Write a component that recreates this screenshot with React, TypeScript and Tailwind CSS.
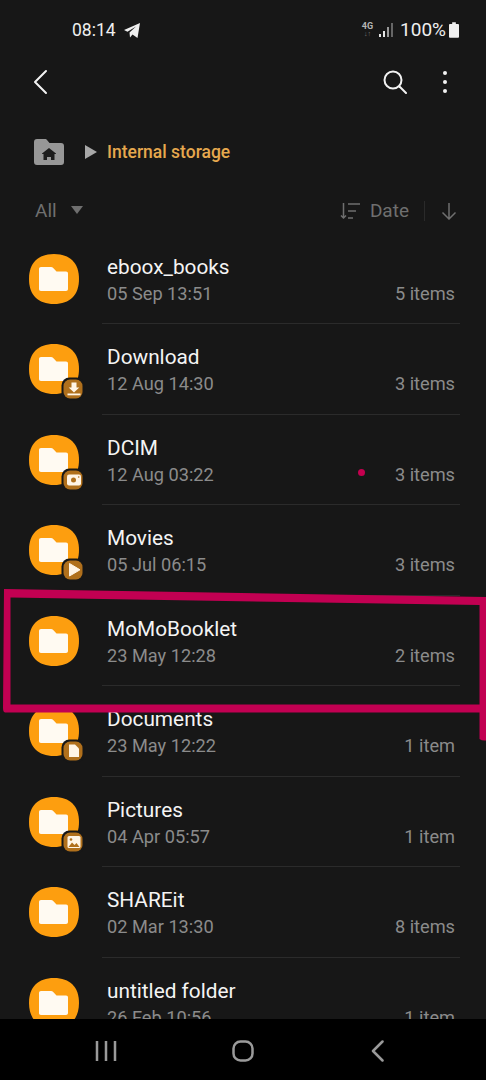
import { ReactNode } from "react";

type Folder = {
  name: string;
  date: string;
  count: string;
  badge?: "download" | "camera" | "play" | "doc" | "image";
  dot?: boolean;
};

const folders: Folder[] = [
  { name: "eboox_books", date: "05 Sep 13:51", count: "5 items" },
  { name: "Download", date: "12 Aug 14:30", count: "3 items", badge: "download" },
  { name: "DCIM", date: "12 Aug 03:22", count: "3 items", badge: "camera", dot: true },
  { name: "Movies", date: "05 Jul 06:15", count: "3 items", badge: "play" },
  { name: "MoMoBooklet", date: "23 May 12:28", count: "2 items" },
  { name: "Documents", date: "23 May 12:22", count: "1 item", badge: "doc" },
  { name: "Pictures", date: "04 Apr 05:57", count: "1 item", badge: "image" },
  { name: "SHAREit", date: "02 Mar 13:30", count: "8 items" },
  { name: "untitled folder", date: "26 Feb 10:56", count: "1 item" },
];

const badgeGlyphs: Record<string, ReactNode> = {
  download: (
    <>
      <path d="M42.500 38.500h5v5h2.800L45 48.500l-5.300-5h2.800z" fill="#fff5e6" />
      <rect x="38.500" y="49.500" width="13" height="1.800" fill="#fff5e6" />
    </>
  ),
  camera: (
    <>
      <rect x="38" y="39.500" width="14" height="11" rx="2" fill="#fff5e6" />
      <circle cx="44.500" cy="45" r="2.500" fill="#b0701c" />
      <circle cx="49.700" cy="42" r="0.800" fill="#b0701c" />
    </>
  ),
  play: <path d="M40.500 38.500v12.500l10.500-6.200z" fill="#fff5e6" stroke="#fff5e6" strokeLinejoin="round" />,
  doc: <path d="M40 38.500h6l4 4v8.500h-10z" fill="#fff5e6" />,
  image: (
    <>
      <rect x="38.500" y="39" width="13" height="12" rx="1.500" fill="#fff5e6" />
      <path d="M39.500 50l3.500-4.500 2.500 2.500 2-2 3 4z" fill="#b0701c" />
      <circle cx="42" cy="42.500" r="1.300" fill="#b0701c" />
    </>
  ),
};

const FolderIcon = ({ badge }: { badge?: Folder["badge"] }) => (
  <svg width="56" height="58" viewBox="0 0 56 58" className="shrink-0">
    <path
      d="M25 0C41 0 50 9 50 25S41 50 25 50 0 41 0 25 9 0 25 0z"
      fill="#fd9e0f"
    />
    <path
      d="M12 13h10c1 0 1.600.4 2.200 1l3.300 3.500H37c1.300 0 2 .8 2 2V35c0 1.300-.8 2-2 2H12c-1.300 0-2-.8-2-2V15c0-1.300.8-2 2-2z"
      fill="#fffaf2"
    />
    {badge && (
      <>
        <rect x="32.500" y="33.500" width="23" height="23" rx="8" fill="#171717" />
        <rect x="34.500" y="35.500" width="19" height="19" rx="6.500" fill="#b0701c" />
        {badgeGlyphs[badge]}
      </>
    )}
  </svg>
);

const FolderRow = ({ folder, last }: { folder: Folder; last: boolean }) => (
  <div className="flex h-[90.5px] shrink-0 pl-[29px] pr-[26px]">
    <div className="pt-[20px] w-[73px] shrink-0">
      <FolderIcon badge={folder.badge} />
    </div>
    <div className={`flex-1 pl-[5px] pr-[5px] pt-[19px] ${last ? "" : "border-b border-[#2b2b2b]"}`}>
      <div className="text-[20.800px] leading-[28px] text-[#f4f4f4]">{folder.name}</div>
      <div className="flex items-center justify-between text-[18.200px] leading-[26px] text-[#8b8b8b]">
        <span>{folder.date}</span>
        <span className="flex items-center">
          {folder.dot && <span className="mb-[4px] mr-[30px] h-[7px] w-[7px] rounded-full bg-[#c4004f]" />}
          {folder.count}
        </span>
      </div>
    </div>
  </div>
);

export default function App() {
  return (
    <div
      className="relative flex h-[1080px] w-[486px] flex-col overflow-hidden bg-[#171717]"
      style={{ fontFamily: "Roboto, sans-serif" }}
    >
      {/* status bar */}
      <div className="flex h-[60px] shrink-0 items-center justify-between pl-[72px] pr-[27px] text-[#efefef]">
        <div className="flex items-center gap-[8px]">
          <span className="text-[17.500px]">08:14</span>
          <svg width="16" height="15" viewBox="0 0 16 15">
            <path d="M0 7L16 0l-2.500 15-5-3.500L6 14.500l-.5-5L12 3.500 3.500 8.800z" fill="#efefef" />
          </svg>
        </div>
        <div className="flex items-center">
          <div className="mr-[6px] flex flex-col items-center text-[9px] font-bold leading-[9px] text-[#b5b5b5]">
            <span>4G</span>
            <span className="text-[7px] leading-[7px] text-[#777]">↓↑</span>
          </div>
          <svg width="16" height="16" viewBox="0 0 16 16" className="mr-[5px]">
            <rect x="0" y="12" width="2" height="3" fill="#e4e4e4" />
            <rect x="4" y="9" width="2" height="6" fill="#e4e4e4" />
            <rect x="8" y="5" width="2" height="10" fill="#999" />
            <rect x="12" y="1" width="2" height="14" fill="#666" />
          </svg>
          <span className="text-[19px]">100%</span>
          <svg width="10" height="16" viewBox="0 0 11 17" className="ml-[3px]">
            <path d="M3.500 0h4v2H10a1 1 0 0 1 1 1v13a1 1 0 0 1-1 1H1a1 1 0 0 1-1-1V3a1 1 0 0 1 1-1h2.500z" fill="#efefef" />
          </svg>
        </div>
      </div>

      {/* toolbar */}
      <div className="flex h-[44px] shrink-0 items-center justify-between pl-[33px] pr-[39px]">
        <svg width="15" height="26" viewBox="0 0 15 26" fill="none" stroke="#f2f2f2" strokeWidth="2" strokeLinecap="round" strokeLinejoin="round">
          <path d="M13 2L2 13l11 11" />
        </svg>
        <div className="flex items-center gap-[36px]">
          <svg width="24" height="24" viewBox="0 0 24 24" fill="none" stroke="#f2f2f2" strokeWidth="2" strokeLinecap="round">
            <circle cx="10" cy="10" r="8.500" />
            <path d="M16.500 16.500l6.500 6.500" />
          </svg>
          <div className="flex flex-col gap-[5px]">
            <span className="h-[4px] w-[4px] rounded-full bg-[#f2f2f2]" />
            <span className="h-[4px] w-[4px] rounded-full bg-[#f2f2f2]" />
            <span className="h-[4px] w-[4px] rounded-full bg-[#f2f2f2]" />
          </div>
        </div>
      </div>

      {/* breadcrumb */}
      <div className="mt-[20px] flex h-[52px] shrink-0 items-center pl-[34px] pt-[4px]">
        <svg width="30" height="26" viewBox="0 0 30 26">
          <path d="M3 0h8c1 0 1.500.3 2 1l2.500 3H27a3 3 0 0 1 3 3v16a3 3 0 0 1-3 3H3a3 3 0 0 1-3-3V3a3 3 0 0 1 3-3z" fill="#979797" />
          <path d="M15 9l7 5.500v.5h-1.500v6h-3.500v-3h-4v3H9.500v-6H8v-.5z" fill="#1c1c1c" />
        </svg>
        <svg width="12" height="14" viewBox="0 0 12 14" className="ml-[21px]">
          <path d="M0 0l12 7-12 7z" fill="#a8a8a8" />
        </svg>
        <span className="ml-[10px] text-[17.500px] font-medium text-[#e6a84e]">Internal storage</span>
      </div>

      {/* sort row */}
      <div className="mt-[16px] flex h-[56px] shrink-0 items-start pl-[35px] pr-[29px] pt-[5px] text-[19px] leading-[28px] text-[#6f6f6f]">
        <span>All</span>
        <svg width="12" height="8" viewBox="0 0 12 8" className="ml-[14px] mt-[9px]">
          <path d="M0 0h12L6 8z" fill="#6f6f6f" />
        </svg>
        <div className="ml-auto flex items-center">
          <svg width="21" height="18" viewBox="0 0 21 18" fill="none" stroke="#6f6f6f" strokeWidth="1.500">
            <path d="M3.500 1v15M1 13.500L3.500 16 6 13.500M8 2h12M8 9h8M8 16h5" />
          </svg>
          <span className="ml-[9px]">Date</span>
          <span className="ml-[15px] h-[20px] w-px bg-[#2a2a2a]" />
          <svg width="16" height="18" viewBox="0 0 16 18" fill="none" stroke="#6f6f6f" strokeWidth="1.500" className="ml-[16px]">
            <path d="M8 1v16M1.500 10.500L8 17l6.500-6.500" />
          </svg>
        </div>
      </div>

      {/* folder list */}
      <div className="mt-[-14.300px] flex min-h-0 flex-1 flex-col overflow-hidden">
        {folders.map((folder, i) => (
          <FolderRow key={folder.name} folder={folder} last={i === folders.length - 1} />
        ))}
      </div>

      {/* nav bar */}
      <div className="flex h-[61px] shrink-0 items-center justify-between bg-black pl-[95px] pr-[102px] pt-[3px]">
        <svg width="22" height="22" viewBox="0 0 22 22" stroke="#9a9a9a" strokeWidth="2.500">
          <path d="M2 1v20M11 1v20M20 1v20" />
        </svg>
        <svg width="22" height="22" viewBox="0 0 22 22" fill="none" stroke="#9a9a9a" strokeWidth="2.500" className="mr-[3px]">
          <rect x="1.500" y="1.500" width="19" height="19" rx="7" />
        </svg>
        <svg width="13" height="22" viewBox="0 0 13 22" fill="none" stroke="#9a9a9a" strokeWidth="2.500" strokeLinecap="round" strokeLinejoin="round">
          <path d="M11.500 1.500L2 11l9.500 9.500" />
        </svg>
      </div>

      {/* hand-drawn highlight on top of the screenshot */}
      <svg className="absolute left-0 top-0 pointer-events-none" width="486" height="1080" viewBox="0 0 486 1080">
        <path
          d="M4 589L486 597V740.500Q482 741 479.500 739V712.500H5Q3 712 3 708zM10.500 597.500V704.500H479.500V605z"
          fill="#c20052"
          fillRule="evenodd"
        />
      </svg>
    </div>
  );
}
